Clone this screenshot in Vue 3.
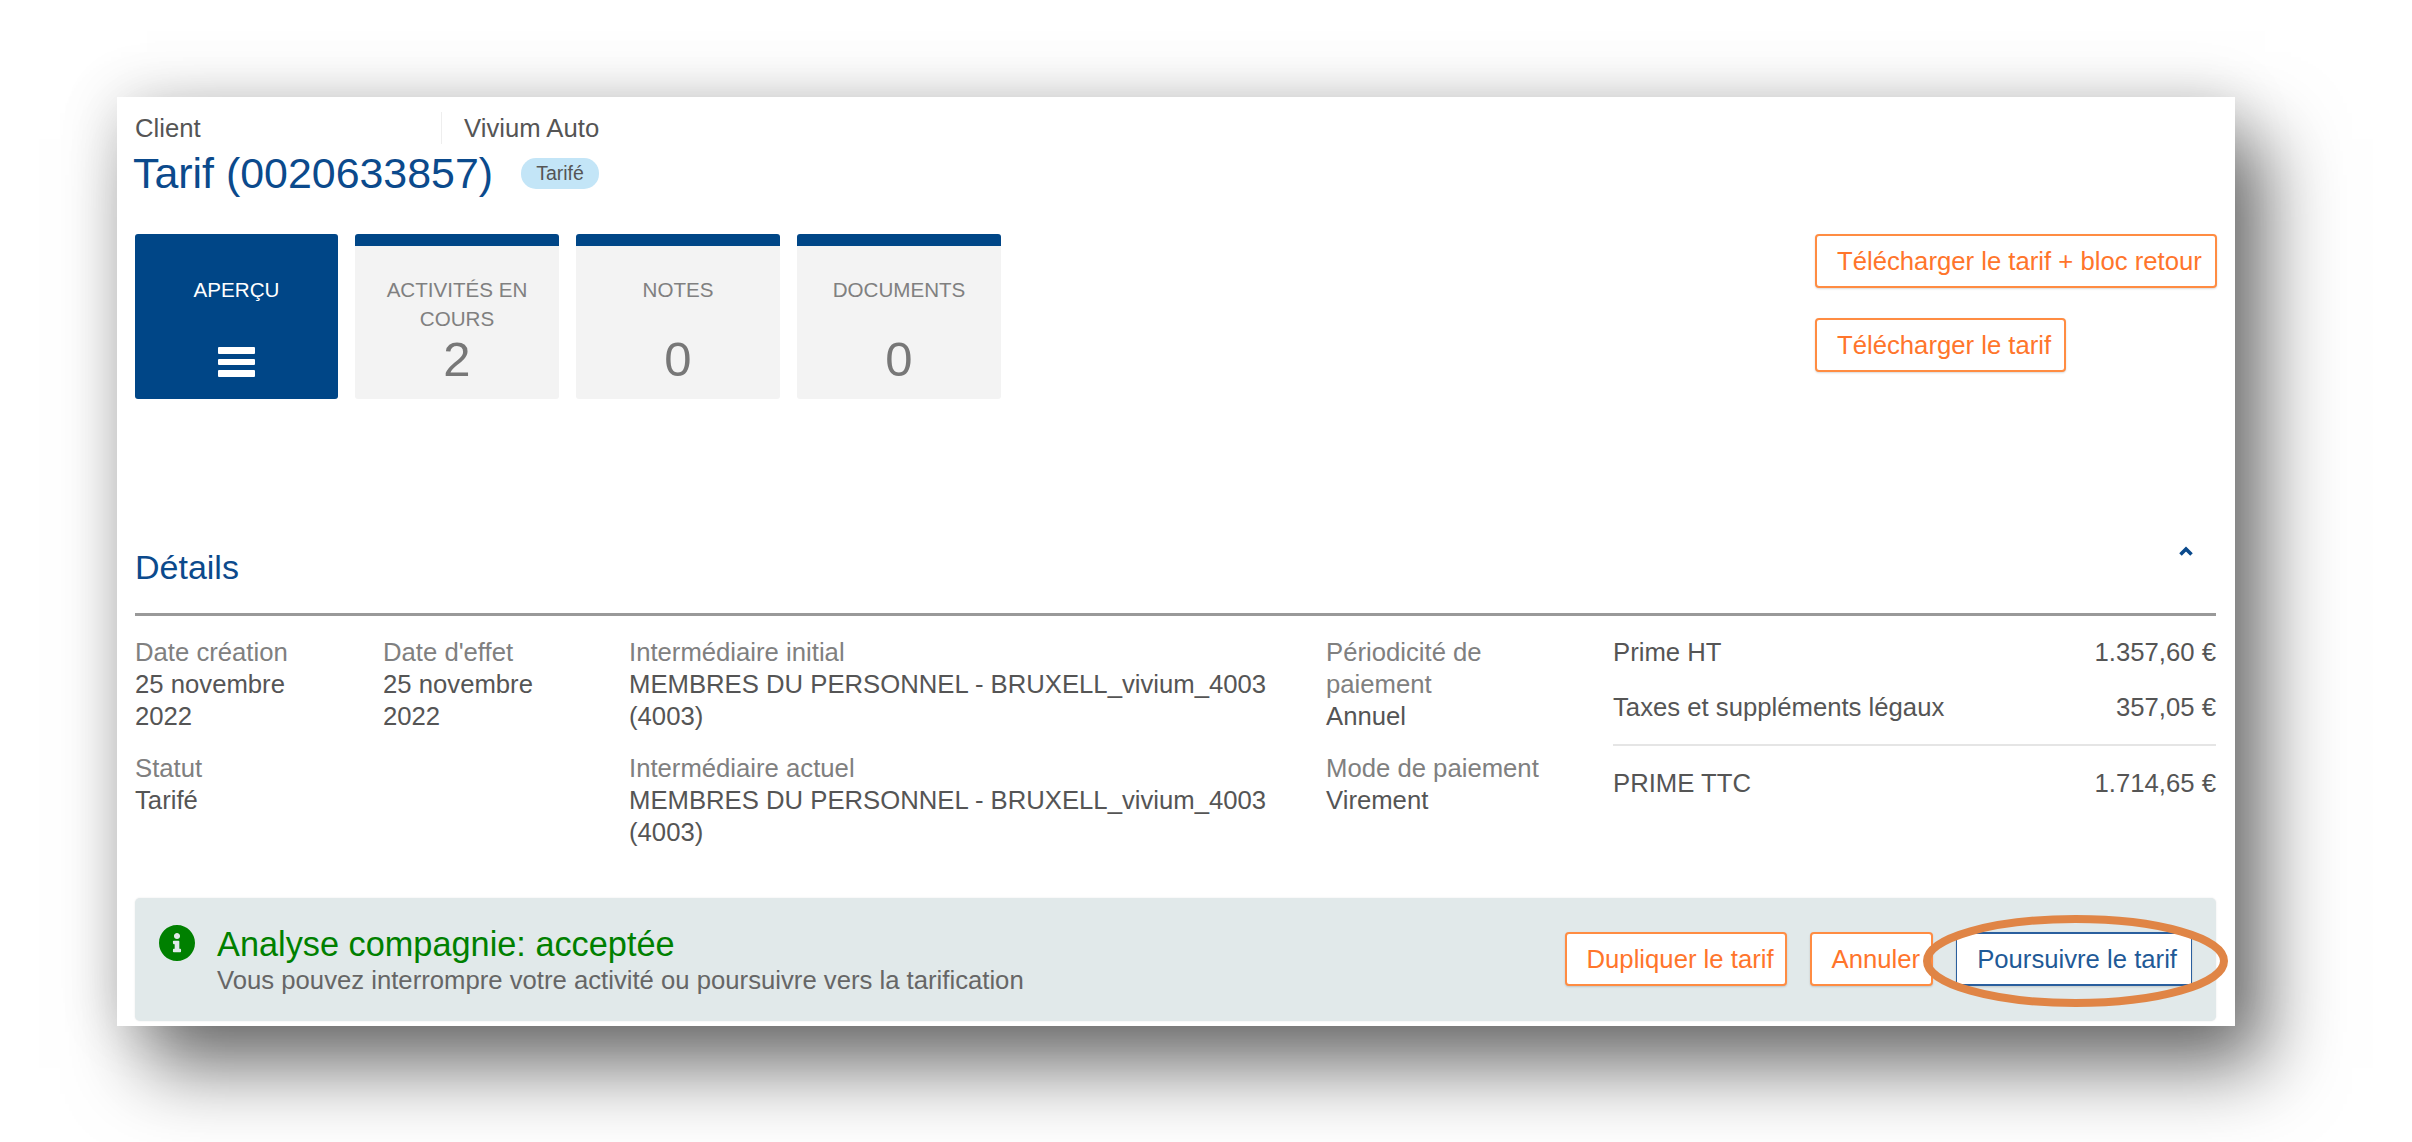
<script setup>
const tabs = [
  { label: 'ACTIVITÉS EN COURS', count: 2 },
  { label: 'NOTES', count: 0 },
  { label: 'DOCUMENTS', count: 0 },
]
</script>

<template>
  <div class="page">
    <main class="card">
      <div class="crumb">
        <span class="crumb-a">Client</span>
        <span class="crumb-b">Vivium Auto</span>
      </div>
      <div class="title-row">
        <h1>Tarif (0020633857)</h1>
        <span class="badge">Tarifé</span>
      </div>

      <div class="top-row">
        <div class="tabs">
          <div class="tab active">
            <div class="tab-label">APERÇU</div>
            <div class="burger"><i></i><i></i><i></i></div>
          </div>
          <div v-for="t in tabs" :key="t.label" class="tab">
            <div class="tab-label">{{ t.label }}</div>
            <div class="tab-count">{{ t.count }}</div>
          </div>
        </div>
        <div class="top-actions">
          <button class="btn">Télécharger le tarif + bloc retour</button>
          <button class="btn">Télécharger le tarif</button>
        </div>
      </div>

      <div class="section-head">
        <h2>Détails</h2>
        <svg class="chev" width="14" height="10" viewBox="0 0 14 10"><path d="M1.5 8.5 7 3l5.5 5.5" fill="none" stroke="#0b4a8c" stroke-width="3.6"/></svg>
      </div>

      <div class="details">
        <div class="col c1">
          <div class="field"><div class="lab">Date création</div><div class="val">25 novembre 2022</div></div>
          <div class="field"><div class="lab">Statut</div><div class="val">Tarifé</div></div>
        </div>
        <div class="col c2">
          <div class="field"><div class="lab">Date d'effet</div><div class="val">25 novembre 2022</div></div>
        </div>
        <div class="col c3">
          <div class="field"><div class="lab">Intermédiaire initial</div><div class="val">MEMBRES DU PERSONNEL - BRUXELL_vivium_4003 (4003)</div></div>
          <div class="field"><div class="lab">Intermédiaire actuel</div><div class="val">MEMBRES DU PERSONNEL - BRUXELL_vivium_4003 (4003)</div></div>
        </div>
        <div class="col c4">
          <div class="field"><div class="lab">Périodicité de paiement</div><div class="val">Annuel</div></div>
          <div class="field"><div class="lab">Mode de paiement</div><div class="val">Virement</div></div>
        </div>
        <div class="col c5">
          <div class="sum"><span>Prime HT</span><span>1.357,60 €</span></div>
          <div class="sum"><span>Taxes et suppléments légaux</span><span>357,05 €</span></div>
          <div class="sum total"><span>PRIME TTC</span><span>1.714,65 €</span></div>
        </div>
      </div>

      <div class="alert">
        <svg class="info" width="36" height="36" viewBox="8 8 496 496"><path fill="#008000" d="M256 8C119.043 8 8 119.083 8 256c0 136.997 111.043 248 248 248s248-111.003 248-248C504 119.083 392.957 8 256 8zm0 110c23.196 0 42 18.804 42 42s-18.804 42-42 42-42-18.804-42-42 18.804-42 42-42zm56 254c0 6.627-5.373 12-12 12h-88c-6.627 0-12-5.373-12-12v-24c0-6.627 5.373-12 12-12h12v-64h-12c-6.627 0-12-5.373-12-12v-24c0-6.627 5.373-12 12-12h64c6.627 0 12 5.373 12 12v100h12c6.627 0 12 5.373 12 12v24z"/></svg>
        <div class="alert-text">
          <div class="alert-title">Analyse compagnie: acceptée</div>
          <div class="alert-sub">Vous pouvez interrompre votre activité ou poursuivre vers la tarification</div>
        </div>
        <div class="alert-actions">
          <button class="btn slim">Dupliquer le tarif</button>
          <button class="btn slim">Annuler</button>
          <button class="btn primary">Poursuivre le tarif</button>
        </div>
        <svg class="ring" width="305" height="92" viewBox="0 0 305 92"><ellipse cx="152.5" cy="46" rx="148.5" ry="42" fill="none" stroke="#e08546" stroke-width="8"/></svg>
      </div>
    </main>
  </div>
</template>

<style>
html, body { margin: 0; background: #fff; }
</style>

<style scoped>
.page {
  width: 2412px;
  height: 1142px;
  box-sizing: border-box;
  padding: 97px 0 0 117px;
  overflow: hidden;
  background: #fff;
  font-family: "Liberation Sans", Arial, sans-serif;
  font-size: 25.7px;
  line-height: 32px;
  color: #555;
}
.card {
  width: 2118px;
  height: 929px;
  box-sizing: border-box;
  padding: 15px 19px 5px 18px;
  background: #fff;
  box-shadow: 30px 42px 72px rgba(0, 0, 0, 0.55), 0 0 55px rgba(0, 0, 0, 0.15);
}
.crumb { display: flex; height: 32px; }
.crumb-a { width: 306px; border-right: 1px solid #eee; }
.crumb-b { margin-left: 22px; }
.title-row { display: flex; align-items: center; height: 50px; margin-top: 4px; }
h1 { margin: 0 0 0 -2px; font-size: 42.9px; font-weight: 400; line-height: 50px; color: #0b4a8c; }
.badge {
  margin-left: 28px;
  width: 78px;
  height: 31px;
  border-radius: 15px;
  background: #c3e5f7;
  font-size: 19.5px;
  line-height: 31px;
  text-align: center;
}
.top-row { display: flex; justify-content: space-between; margin-top: 36px; }
.tabs { display: flex; gap: 17px; }
.tab {
  width: 204px;
  height: 165px;
  box-sizing: border-box;
  padding-top: 29px;
  background: #f3f3f3;
  border-top: 12px solid #004687;
  border-radius: 3px;
  text-align: center;
  color: #808080;
}
.tab.active { width: 203px; background: #004687; color: #fff; }
.tab-label { font-size: 20.6px; line-height: 29px; height: 59px; }
.tab-count { font-size: 49px; line-height: 50px; color: #777; }
.burger { display: flex; flex-direction: column; gap: 5px; width: 37px; margin: 13px auto 0; }
.burger i { display: block; height: 6.6px; background: #fff; border-radius: 1px; }
.top-actions { display: flex; flex-direction: column; align-items: flex-start; gap: 30px; width: 401px; }
.btn {
  height: 54px;
  box-sizing: border-box;
  padding: 0 13px 0 20px;
  font: inherit;
  color: #ff752b;
  background: #fff;
  border: 2px solid #ff8c42;
  border-radius: 4px;
  white-space: nowrap;
  box-shadow: 0 1px 2px rgba(0, 0, 0, 0.15);
}
.btn.slim { padding-right: 11px; }
.btn.primary { padding-right: 14px; color: #1f5a97; border: 2px solid #2a5f9e; border-left-width: 1px; border-right-width: 1px; border-radius: 0; }
.section-head {
  display: flex;
  justify-content: space-between;
  margin-top: 148px;
  padding-bottom: 26px;
  border-bottom: 3px solid #999;
}
h2 { margin: 0; font-size: 34px; font-weight: 400; line-height: 40px; color: #0b4a8c; }
.chev { margin: -1px 23px 0 0; }
.details { display: flex; padding-top: 20px; }
.col { box-sizing: border-box; }
.c1 { width: 248px; padding-right: 60px; }
.c2 { width: 246px; padding-right: 60px; }
.c3 { width: 697px; padding-right: 30px; }
.c4 { width: 287px; padding-right: 40px; }
.c5 { flex: 1; }
.field + .field { margin-top: 20px; }
.lab { color: #808080; }
.val { color: #555; }
.sum { display: flex; justify-content: space-between; }
.sum + .sum { margin-top: 23px; }
.sum.total { margin-top: 21px; padding-top: 21px; border-top: 2px solid #e5e5e5; }
.alert {
  position: relative;
  display: flex;
  align-items: flex-start;
  height: 123px;
  box-sizing: border-box;
  margin-top: 50px;
  padding: 0 24px;
  background: #e1e9ea;
  border-radius: 5px;
  box-shadow: 0 0 2px rgba(0, 0, 0, 0.1);
}
.info { margin-top: 27px; flex: none; }
.alert-text { margin: 27px 0 0 22px; flex: 1; }
.alert-title { font-size: 34.3px; line-height: 38px; color: #008000; }
.alert-sub { margin-top: 1px; color: #666; }
.alert-actions { display: flex; gap: 23px; margin-top: 34px; }
.ring { position: absolute; left: 1788px; top: 17px; }
</style>
